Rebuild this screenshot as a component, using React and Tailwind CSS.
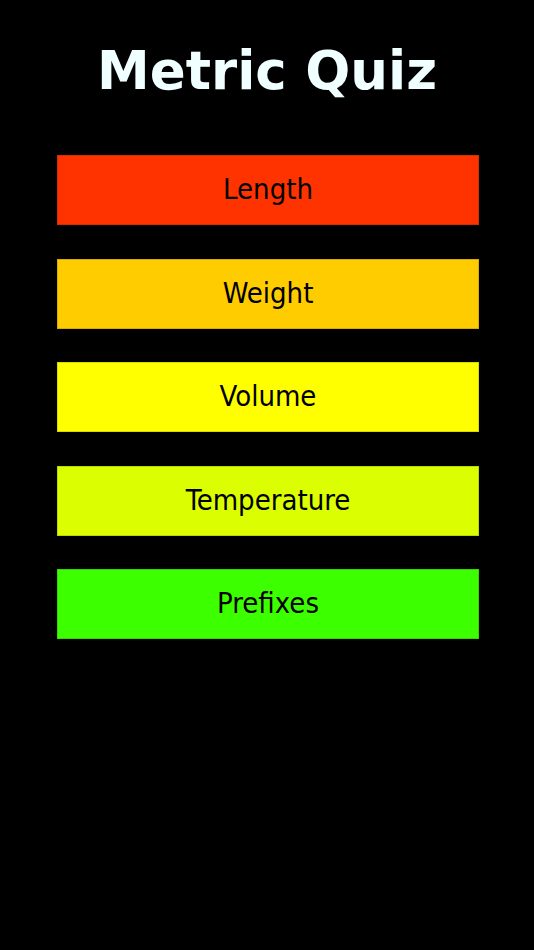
export default function App() {
  const items = [
    { label: "Length", cls: "bg-[#ff3300] border-[#d92b00]" },
    { label: "Weight", cls: "bg-[#ffcc00] border-[#d9ad00]" },
    { label: "Volume", cls: "bg-[#ffff00] border-[#d9d900]" },
    { label: "Temperature", cls: "bg-[#dbff00] border-[#bad900]" },
    { label: "Prefixes", cls: "bg-[#3cff00] border-[#33d900]" },
  ];
  return (
    <div className="w-[534px] h-[950px] bg-black flex flex-col items-center" style={{ fontFamily: '"DejaVu Sans", sans-serif' }}>
      <h1 className="mt-[40px] h-[62px] leading-[62px] text-[53px] font-bold text-[#f0ffff]">Metric Quiz</h1>
      <div className="mt-[53px] flex flex-col gap-[33.5px] w-[422px] ml-[2px]">
        {items.map((it) => (
          <button key={it.label} className={`h-[70px] w-full border flex items-center justify-center text-[29px] text-black ${it.cls}`} style={{ fontFamily: '"DejaVu Sans Condensed", "DejaVu Sans", sans-serif', fontStretch: "condensed" }}>
            {it.label}
          </button>
        ))}
      </div>
    </div>
  );
}
